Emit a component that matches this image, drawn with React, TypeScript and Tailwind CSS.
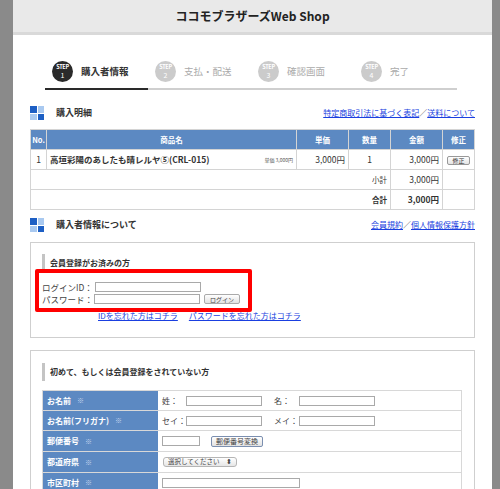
import React from "react";

function SecIcon() {
  return (
    <div className="grid grid-cols-2 gap-[1px] w-[14px] h-[14px] shrink-0">
      <span className="bg-[#1d5fc4]" />
      <span className="bg-[#a9c9f0]" />
      <span className="bg-[#a9c9f0]" />
      <span className="bg-[#1d5fc4]" />
    </div>
  );
}

function Step({ n, label, active }: { n: number; label: string; active?: boolean }) {
  return (
    <div
      className={`w-[103px] flex items-center gap-[8px] pl-[7px] pb-[6px] border-b-2 ${
        active ? "border-[#2a2a2a]" : "border-[#cfcfcf]"
      }`}
    >
      <div
        className={`w-[21px] h-[21px] rounded-full flex flex-col items-center justify-center text-white ${
          active ? "bg-[#2a2a2a]" : "bg-[#cbcbcb]"
        }`}
      >
        <span className="block text-[5.5px] leading-[8px] font-bold tracking-[-0.3px]">STEP</span>
        <span className="block text-[7px] leading-[10px] -mt-[1px]">{n}</span>
      </div>
      <span
        className={`text-[9.5px] ${active ? "font-bold text-[#333]" : "text-[#aaa]"}`}
      >
        {label}
      </span>
    </div>
  );
}

function SubHead({ title }: { title: string }) {
  return (
    <div className="flex items-center h-[18px]">
      <span className="w-[3px] h-full bg-[#c4c4c4]" />
      <span className="ml-[5px] text-[8px] font-bold text-[#333]">{title}</span>
    </div>
  );
}

function Input({ w }: { w: string }) {
  return <span className={`inline-block ${w} h-[10px] border border-[#a9a9a9] bg-white`} />;
}

const formRows: { label: string; h: string; body: React.ReactNode }[] = [
  {
    label: "お名前",
    h: "h-[20px]",
    body: (
      <>
        <span className="w-[24px]">姓：</span>
        <Input w="w-[76px]" />
        <span className="ml-[12px] w-[25px]">名：</span>
        <Input w="w-[76px]" />
      </>
    ),
  },
  {
    label: "お名前(フリガナ)",
    h: "h-[20px]",
    body: (
      <>
        <span className="w-[24px]">セイ：</span>
        <Input w="w-[76px]" />
        <span className="ml-[12px] w-[25px]">メイ：</span>
        <Input w="w-[76px]" />
      </>
    ),
  },
  {
    label: "郵便番号",
    h: "h-[21px]",
    body: (
      <>
        <Input w="w-[38px]" />
        <span className="ml-[11px] h-[11px] px-[4px] flex items-center text-[7px] border border-[#7b8fb0] rounded-[2px] bg-gradient-to-b from-white to-[#e2e2e2]">
          郵便番号変換
        </span>
      </>
    ),
  },
  {
    label: "都道府県",
    h: "h-[21px]",
    body: (
      <span className="ml-[1px] w-[74px] h-[10px] px-[4px] flex items-center justify-between text-[6.5px] border border-[#b5b5b5] rounded-[3px] bg-gradient-to-b from-white to-[#e6e6e6]">
        <span>選択してください</span>
        <span>⬍</span>
      </span>
    ),
  },
  {
    label: "市区町村",
    h: "h-[20px]",
    body: <Input w="w-[138px]" />,
  },
];

export default function App() {
  return (
    <div className="w-[500px] h-[489px] overflow-hidden bg-[#8a8a8a] flex pl-[13px] pr-[9px] font-['Noto_Sans_CJK_JP','Liberation_Sans',sans-serif] text-[#333]">
      <div className="flex-1 bg-white flex flex-col">
        <header className="h-[35px] shrink-0 bg-[#e9e9e9] border-b-[3px] border-[#d9d9d9] flex items-center justify-center">
          <h1 className="text-[12px] font-bold text-[#222]">ココモブラザーズWeb Shop</h1>
        </header>

        <div className="mt-[26px] ml-[32px] flex">
          <Step n={1} label="購入者情報" active />
          <Step n={2} label="支払・配送" />
          <Step n={3} label="確認画面" />
          <Step n={4} label="完了" />
        </div>

        <div className="px-[17px]">
          {/* 購入明細 */}
          <div className="mt-[16px] h-[14px] flex items-center">
            <SecIcon />
            <span className="ml-[12px] text-[9px] font-bold text-[#333]">購入明細</span>
            <span className="ml-auto text-[8px] text-[#555]">
              <a className="text-[#1a3fe0] underline">特定商取引法に基づく表記</a>／
              <a className="text-[#1a3fe0] underline">送料について</a>
            </span>
          </div>

          <table className="mt-[9px] w-[444px] border-collapse table-fixed text-[8.5px]">
            <colgroup>
              <col className="w-[16px]" />
              <col className="w-[250px]" />
              <col className="w-[52px]" />
              <col className="w-[42px]" />
              <col className="w-[52px]" />
              <col className="w-[32px]" />
            </colgroup>
            <thead>
              <tr className="h-[20px] bg-[#5c89c2] text-white text-[7.5px] font-bold">
                {["No.", "商品名", "単価", "数量", "金額", "修正"].map((h) => (
                  <th key={h} className="border border-[#d4d4d4] p-0 text-center">
                    {h}
                  </th>
                ))}
              </tr>
            </thead>
            <tbody>
              <tr className="h-[20px]">
                <td className="border border-[#d4d4d4] text-center">1</td>
                <td className="border border-[#d4d4d4] px-[3px]">
                  <div className="flex items-center justify-between">
                    <span className="font-bold">高垣彩陽のあしたも晴レルヤ⑤(CRL-015)</span>
                    <span className="text-[5px] text-[#555]">単価 3,000円</span>
                  </div>
                </td>
                <td className="border border-[#d4d4d4] text-right pr-[3px]">3,000円</td>
                <td className="border border-[#d4d4d4] text-center">1</td>
                <td className="border border-[#d4d4d4] text-right pr-[3px]">3,000円</td>
                <td className="border border-[#d4d4d4] text-center">
                  <span className="inline-block px-[4px] h-[9px] leading-[8px] text-[6px] border border-[#999] rounded-[2px] bg-gradient-to-b from-white to-[#e4e4e4]">
                    修正
                  </span>
                </td>
              </tr>
              <tr className="h-[20px]">
                <td colSpan={4} className="border border-[#d4d4d4] text-right pr-[3px] text-[7.5px]">
                  小計
                </td>
                <td className="border border-[#d4d4d4] text-right pr-[3px]">3,000円</td>
                <td className="border border-[#d4d4d4]" />
              </tr>
              <tr className="h-[20px] font-bold">
                <td colSpan={4} className="border border-[#d4d4d4] text-right pr-[3px] text-[7.5px]">
                  合計
                </td>
                <td className="border border-[#d4d4d4] text-right pr-[3px]">3,000円</td>
                <td className="border border-[#d4d4d4]" />
              </tr>
            </tbody>
          </table>

          {/* 購入者情報について */}
          <div className="mt-[8px] h-[14px] flex items-center">
            <SecIcon />
            <span className="ml-[12px] text-[9px] font-bold text-[#333]">購入者情報について</span>
            <span className="ml-auto text-[8px] text-[#555]">
              <a className="text-[#1a3fe0] underline">会員規約</a>／
              <a className="text-[#1a3fe0] underline">個人情報保護方針</a>
            </span>
          </div>

          <div className="relative mt-[10px] h-[96px] border border-[#cfcfcf] px-[11px] pt-[11px]">
            <SubHead title="会員登録がお済みの方" />
            <div className="mt-[9px] text-[8.5px] text-[#444]">
              <div className="h-[12px] flex items-center">
                <span className="w-[53px]">ログインID：</span>
                <Input w="w-[106px]" />
              </div>
              <div className="h-[12px] flex items-center">
                <span className="w-[52px]">パスワード：</span>
                <Input w="w-[106px]" />
                <span className="ml-[4px] h-[10px] px-[5px] flex items-center text-[6px] border border-[#aaa] rounded-[2px] bg-gradient-to-b from-white to-[#e2e2e2]">
                  ログイン
                </span>
              </div>
            </div>
            <div className="mt-[5px] ml-[56px] h-[12px] flex items-center gap-[11px] text-[8px]">
              <a className="text-[#1a3fe0] underline">IDを忘れた方はコチラ</a>
              <a className="text-[#1a3fe0] underline">パスワードを忘れた方はコチラ</a>
            </div>
            <div className="absolute left-[4px] top-[26px] w-[217px] h-[43px] border-[4px] border-[#f00] rounded-[2px]" />
          </div>

          <div className="mt-[12px] border border-[#cfcfcf] px-[11px] pt-[12px] pb-[12px]">
            <SubHead title="初めて、もしくは会員登録をされていない方" />
            <div className="mt-[9px] w-[420px] border-t border-l border-[#d8d8d8]">
              {formRows.map((r) => (
                <div key={r.label} className={`flex ${r.h}`}>
                  <div className="w-[115px] shrink-0 bg-[#5c89c2] border-b border-[#d8d8d8] pl-[4px] flex items-center text-white text-[8px] font-bold">
                    {r.label}
                    <span className="ml-[6px] text-[#c9d8ef] font-normal text-[7px]">※</span>
                  </div>
                  <div className="flex-1 border-b border-r border-[#d8d8d8] pl-[4px] flex items-center text-[8px] text-[#444]">
                    {r.body}
                  </div>
                </div>
              ))}
            </div>
          </div>
        </div>
      </div>
    </div>
  );
}
